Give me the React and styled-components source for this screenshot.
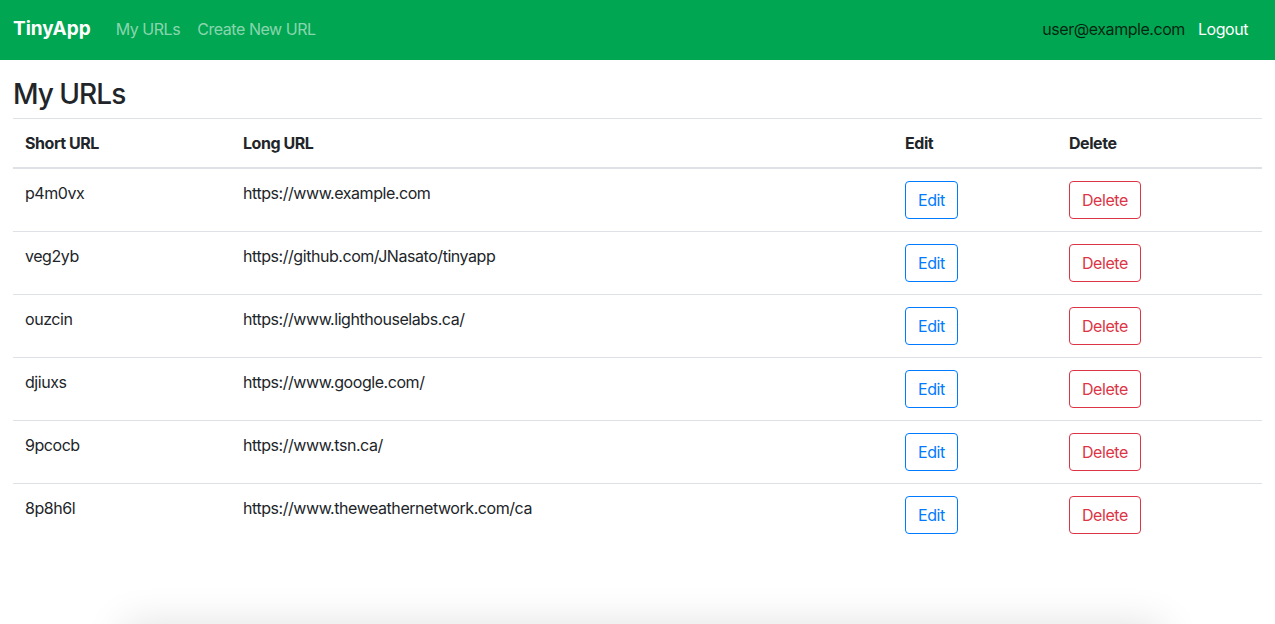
import React from "react";
import styled, { createGlobalStyle } from "styled-components";

const urls = [
  { id: "p4m0vx", long: "https://www.example.com" },
  { id: "veg2yb", long: "https://github.com/JNasato/tinyapp" },
  { id: "ouzcin", long: "https://www.lighthouselabs.ca/" },
  { id: "djiuxs", long: "https://www.google.com/" },
  { id: "9pcocb", long: "https://www.tsn.ca/" },
  { id: "8p8h6l", long: "https://www.theweathernetwork.com/ca" },
];

const App = () => {
  return (
    <>
      <GlobalStyle />
      <Navbar>
        <Brand href="#">TinyApp</Brand>
        <NavLinks>
          <NavLink href="#">My URLs</NavLink>
          <NavLink href="#">Create New URL</NavLink>
        </NavLinks>
        <UserArea>
          <UserEmail>user@example.com</UserEmail>
          <LogoutButton>Logout</LogoutButton>
        </UserArea>
      </Navbar>
      <Main>
        <Title>My URLs</Title>
        <Table>
          <colgroup>
            <col style={{ width: 218 }} />
            <col style={{ width: 662 }} />
            <col style={{ width: 164 }} />
            <col />
          </colgroup>
          <thead>
            <tr>
              <Th>Short URL</Th>
              <Th>Long URL</Th>
              <Th>Edit</Th>
              <Th>Delete</Th>
            </tr>
          </thead>
          <tbody>
            {urls.map((u) => (
              <Row key={u.id}>
                <Td>{u.id}</Td>
                <Td>{u.long}</Td>
                <Td>
                  <OutlineButton $color="#007bff">Edit</OutlineButton>
                </Td>
                <Td>
                  <OutlineButton $color="#dc3545">Delete</OutlineButton>
                </Td>
              </Row>
            ))}
          </tbody>
        </Table>
      </Main>
      <ShadowCard />
    </>
  );
};

const GlobalStyle = createGlobalStyle`
  body {
    margin: 0;
    font-family: Inter, "Noto Sans", "Liberation Sans", sans-serif;
    font-size: 16px;
    line-height: 1.5;
    letter-spacing: -0.028em;
    color: #212529;
    background: #fff;
    overflow: hidden;
  }
`;

const Navbar = styled.nav`
  display: flex;
  align-items: center;
  height: 60px;
  padding: 0 13px 2px;
  background: #00a651;
  box-sizing: border-box;
`;

const Brand = styled.a`
  font-size: 19px;
  font-weight: 700;
  color: #fff;
  text-decoration: none;
  margin-right: 25px;
  letter-spacing: 0;
`;

const NavLinks = styled.div`
  display: flex;
  gap: 17px;
`;

const NavLink = styled.a`
  color: rgba(255, 255, 255, 0.55);
  text-decoration: none;
`;

const UserArea = styled.div`
  margin-left: auto;
  display: flex;
  align-items: center;
  gap: 13px;
  padding-right: 14px;
`;

const UserEmail = styled.span`
  color: rgba(0, 0, 0, 0.8);
`;

const LogoutButton = styled.button`
  border: none;
  background: none;
  padding: 0;
  color: #fff;
  font: inherit;
  letter-spacing: inherit;
  cursor: pointer;
`;

const Main = styled.main`
  padding: 0 13px;
`;

const Title = styled.h2`
  margin: 18px 0 6px;
  font-size: 28px;
  font-weight: 500;
  line-height: 1.2;
  letter-spacing: -0.035em;
`;

const Table = styled.table`
  width: 100%;
  table-layout: fixed;
  border-collapse: collapse;
  border-top: 1px solid #dee2e6;
`;

const Th = styled.th`
  text-align: left;
  font-weight: 700;
  padding: 12px;
  border-bottom: 2px solid #dee2e6;
`;

const Row = styled.tr`
  & + & td {
    border-top: 1px solid #dee2e6;
  }
`;

const Td = styled.td`
  padding: 12px;
  vertical-align: top;
`;

const OutlineButton = styled.button`
  font: inherit;
  letter-spacing: inherit;
  line-height: 1.5;
  padding: 6px 12px;
  color: ${(p) => p.$color};
  background: transparent;
  border: 1px solid ${(p) => p.$color};
  border-radius: 4px;
  cursor: pointer;
`;

const ShadowCard = styled.div`
  margin: 78px 112px 0 123px;
  height: 60px;
  background: #fff;
  box-shadow: 0 0 40px rgba(0, 0, 0, 0.12);
`;

export default App;
